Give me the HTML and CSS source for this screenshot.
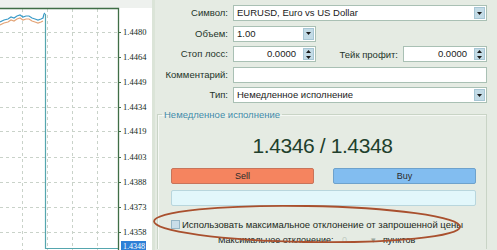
FILE: index.html
```html
<!DOCTYPE html>
<html>
<head lang="ru">
    <meta charset="UTF-8">
    <title>Ордер</title>
    <link rel="stylesheet" href="styles.css">
</head>
<body>
<div class="terminal">
    <div class="chart">
        <svg width="152" height="250" viewBox="0 0 152 250">
            <rect x="0" y="0" width="152" height="8" fill="#eef1ee"/>
            <g stroke="#c9d2c9" stroke-width="1" stroke-dasharray="3 3">
                <line x1="0" y1="32.5" x2="118" y2="32.5"/>
                <line x1="0" y1="57.5" x2="118" y2="57.5"/>
                <line x1="0" y1="82.5" x2="118" y2="82.5"/>
                <line x1="0" y1="107.5" x2="118" y2="107.5"/>
                <line x1="0" y1="131.5" x2="118" y2="131.5"/>
                <line x1="0" y1="157.5" x2="118" y2="157.5"/>
                <line x1="0" y1="182.5" x2="118" y2="182.5"/>
                <line x1="0" y1="207.5" x2="118" y2="207.5"/>
                <line x1="0" y1="232.5" x2="118" y2="232.5"/>
                <line x1="22.5" y1="9" x2="22.5" y2="250"/>
                <line x1="47.5" y1="9" x2="47.5" y2="250"/>
                <line x1="72.5" y1="9" x2="72.5" y2="250"/>
                <line x1="97.5" y1="9" x2="97.5" y2="250"/>
            </g>
            <g stroke="#3f6e46" stroke-width="1">
                <line x1="118" y1="32.5" x2="121" y2="32.5"/>
                <line x1="118" y1="57.5" x2="121" y2="57.5"/>
                <line x1="118" y1="82.5" x2="121" y2="82.5"/>
                <line x1="118" y1="107.5" x2="121" y2="107.5"/>
                <line x1="118" y1="131.5" x2="121" y2="131.5"/>
                <line x1="118" y1="157.5" x2="121" y2="157.5"/>
                <line x1="118" y1="182.5" x2="121" y2="182.5"/>
                <line x1="118" y1="207.5" x2="121" y2="207.5"/>
                <line x1="118" y1="232.5" x2="121" y2="232.5"/>
            </g>
            <polyline fill="none" stroke="#e3a477" stroke-width="1.2" points="0,25 4,23 8,22 11,20 14,21 17,19 20,18 23,20 26,19 29,19 32,21 35,22 38,23 41,22 43,21"/>
            <polyline fill="none" stroke="#3a9bc8" stroke-width="1.2" points="0,22 4,20 8,19 11,17 14,18 17,16 20,15 23,17 26,16 29,16 32,18 35,19 38,20 41,19 43,18 44,14 45,13"/>
            <path d="M45.5 14 V248.5 H118" fill="none" stroke="#55a6ae" stroke-width="1.2"/>
            <path d="M0 8.5 H118.5 V250" fill="none" stroke="#3f6e46" stroke-width="1.3"/>
            <g class="axis">
                <text x="123" y="35">1.4480</text>
                <text x="123" y="60">1.4464</text>
                <text x="123" y="85">1.4449</text>
                <text x="123" y="110">1.4434</text>
                <text x="123" y="134">1.4419</text>
                <text x="123" y="160">1.4403</text>
                <text x="123" y="185">1.4388</text>
                <text x="123" y="210">1.4373</text>
                <text x="123" y="235">1.4358</text>
            </g>
            <rect x="121" y="241" width="25" height="9" fill="#2d7fd6"/>
            <text class="axis-now" x="123" y="248.5">1.4348</text>
        </svg>
    </div>
    <div class="splitter"></div>
    <div class="order">
        <div class="form">
            <label>Символ:</label>
            <div class="field select">EURUSD, Euro vs US Dollar<span class="drop"><svg width="5" height="3" viewBox="0 0 5 3"><path d="M0 0H5L2.5 3Z" fill="#1a1a1a"/></svg></span></div>

            <label>Объем:</label>
            <div class="row">
                <div class="field select short">1.00<span class="drop"><svg width="5" height="3" viewBox="0 0 5 3"><path d="M0 0H5L2.5 3Z" fill="#1a1a1a"/></svg></span></div>
            </div>

            <label>Стоп лосс:</label>
            <div class="row">
                <div class="field spin short"><span class="num">0.0000</span><span class="drop updown"><svg width="5" height="9" viewBox="0 0 5 9"><path d="M0 3H5L2.5 0Z M0 6H5L2.5 9Z" fill="#1a1a1a"/></svg></span></div>
                <span class="tp-label">Тейк профит:</span>
                <div class="field spin tp"><span class="num">0.0000</span><span class="drop updown"><svg width="5" height="9" viewBox="0 0 5 9"><path d="M0 3H5L2.5 0Z M0 6H5L2.5 9Z" fill="#1a1a1a"/></svg></span></div>
            </div>

            <label>Комментарий:</label>
            <div class="field"></div>

            <label>Тип:</label>
            <div class="field select">Немедленное исполнение<span class="drop"><svg width="5" height="3" viewBox="0 0 5 3"><path d="M0 0H5L2.5 3Z" fill="#1a1a1a"/></svg></span></div>
        </div>

        <fieldset class="group">
            <legend>Немедленное исполнение</legend>
            <div class="quote">1.4346 / 1.4348</div>
            <div class="buttons">
                <div class="btn sell">Sell</div>
                <div class="btn buy">Buy</div>
            </div>
            <div class="info"></div>
            <div class="check"><span class="box"></span>Использовать максимальное отклонение от запрошенной цены</div>
            <div class="deviation">
                <span class="dev-label">Максимальное отклонение:</span>
                <span class="dev-field"><span>0</span><span class="dev-drop">▾</span></span>
                <span>пунктов</span>
            </div>
        </fieldset>
    </div>
    <svg class="mark" width="497" height="250" viewBox="0 0 497 250">
        <ellipse cx="307" cy="224" rx="153" ry="18" transform="rotate(1 307 224)" fill="none" stroke="#a9502e" stroke-width="1.8"/>
    </svg>
</div>
</body>
</html>
```

FILE: styles.css
```css
* { margin: 0; padding: 0; box-sizing: border-box;}
body {
    width: 497px;
    height: 250px;
    overflow: hidden;
    background: #e5ebe3;
    font-family: "Liberation Sans", Arial, sans-serif;
    font-size: 9.5px;
    color: #1c2a20;
}
.terminal {
    display: flex;
    height: 250px;
    position: relative;
}
.chart {
    width: 152px;
    background: #fff;
}
.chart svg { display: block;}
.axis text {
    font-family: "Liberation Serif", serif;
    font-size: 8.5px;
    fill: #142a19;
}
.axis-now {
    font-family: "Liberation Serif", serif;
    font-size: 8px;
    fill: #fff;
}
.splitter {
    width: 3px;
    background: #dbe4d8;
}
.order {
    flex: 1;
    padding: 5px 10px 0 0;
}

/* поля ордера */
.form {
    display: grid;
    grid-template-columns: 73px 1fr;
    grid-auto-rows: 16px;
    column-gap: 5px;
    row-gap: 4.5px;
}
.form label {
    text-align: right;
    line-height: 16px;
    color: #24352a;
}
.row {
    display: flex;
    align-items: center;
}
.field {
    height: 16px;
    background: #fff;
    border: 1px solid #a9c0b4;
    line-height: 14px;
    padding-left: 3px;
    position: relative;
    color: #1a1a1a;
}
.select { padding-right: 14px;}
.short { width: 83px;}
.spin { padding-right: 15px; text-align: right;}
.spin .num { padding-right: 4px;}
.tp { width: 84px; margin-left: 5px;}
.tp-label {
    margin-left: auto;
    color: #24352a;
}
.drop {
    position: absolute;
    right: 1px;
    top: 1px;
    width: 11px;
    height: 12px;
    background: #c3dbe6;
    border: 1px solid #a7c6d4;
    display: flex;
    align-items: center;
    justify-content: center;
}
.drop svg { display: block;}

/* группа исполнения */
.group {
    margin: 6px 0 0 2px;
    border: 1px solid #c9d4c6;
    border-bottom: none;
    box-shadow: inset 1px 1px 0 #f5f8f4;
    padding: 0 10px 0 13px;
    height: 140px;
}
.group legend {
    margin-left: -9px;
    padding: 0 2px;
    color: #3f8aa8;
    font-size: 9.5px;
}
.quote {
    text-align: center;
    font-size: 21px;
    letter-spacing: -0.4px;
    color: #21402c;
    line-height: 24px;
    margin: 14px 0 0 0;
    padding-right: 2px;
}
.buttons {
    display: flex;
    gap: 19px;
    margin-top: 10px;
}
.btn {
    flex: 1;
    height: 16px;
    line-height: 14px;
    text-align: center;
    border-radius: 2px;
    font-size: 9px;
    color: #2b2b2b;
}
.sell {
    background: #f5845f;
    border: 1px solid #c8745a;
}
.buy {
    background: #82bdf0;
    border: 1px solid #6ea2cc;
}
.info {
    height: 16px;
    margin-top: 6px;
    background: #e2f7fb;
    border: 1px solid #b8d6dd;
    border-radius: 2px;
}
.check {
    display: flex;
    align-items: center;
    gap: 2px;
    margin-top: 13px;
    color: #1c2a20;
}
.box {
    width: 9px;
    height: 9px;
    background: #c9dde8;
    border: 1px solid #96b6c6;
}
.deviation {
    display: flex;
    align-items: center;
    margin: 5px 0 0 47px;
    font-size: 9px;
    color: #15241a;
}
.dev-label {
    width: 108px;
    white-space: nowrap;
}
.dev-field {
    width: 49px;
    margin-left: 4px;
    display: flex;
    justify-content: space-between;
    color: #c2cbc2;
    padding: 0 3px 0 12px;
}
.dev-drop { color: #9aa8a0;}
.deviation span:last-child { margin-left: 4px;}
.mark {
    position: absolute;
    left: 0;
    top: 0;
    pointer-events: none;
}
```
